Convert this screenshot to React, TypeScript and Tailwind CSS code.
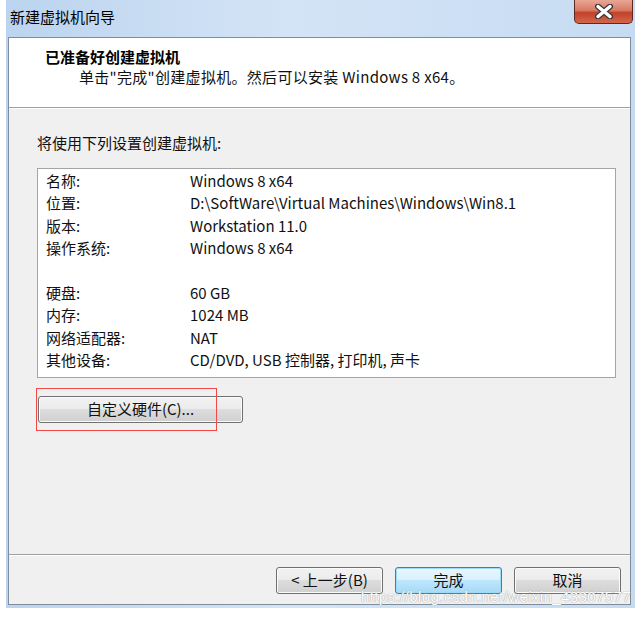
import React from "react";

const FONT = '"Noto Sans CJK SC", "Noto Sans", sans-serif';

const rows: [string, string][] = [
  ["名称:", "Windows 8 x64"],
  ["位置:", "D:\\SoftWare\\Virtual Machines\\Windows\\Win8.1"],
  ["版本:", "Workstation 11.0"],
  ["操作系统:", "Windows 8 x64"],
  ["", ""],
  ["硬盘:", "60 GB"],
  ["内存:", "1024 MB"],
  ["网络适配器:", "NAT"],
  ["其他设备:", "CD/DVD, USB 控制器, 打印机, 声卡"],
];

function WinButton({ label, primary = false, className = "" }: { label: string; primary?: boolean; className?: string }) {
  return (
    <div
      className={
        "h-[27px] flex items-center justify-center rounded-[3px] border text-[15px] text-[#111] whitespace-pre " +
        (primary
          ? "border-[#3c7fb1] bg-[linear-gradient(#eaf6fd_0%,#d9f0fc_50%,#bee6fd_50%,#a7d9f5_100%)] shadow-[inset_0_0_0_1px_#9ddcf8] "
          : "border-[#707070] bg-[linear-gradient(#f2f2f2_0%,#ebebeb_50%,#dddddd_50%,#cfcfcf_100%)] shadow-[inset_0_0_0_1px_#fbfbfb] ") +
        className
      }
    >
      {label}
    </div>
  );
}

export default function App() {
  return (
    <div className="relative w-[643px] h-[617px] bg-white overflow-hidden" style={{ fontFamily: FONT }}>
      {/* window frame */}
      <div className="ml-[6px] w-[629px] pl-[2px] pr-[4px] pb-[3px] bg-[linear-gradient(90deg,#bcd4ef_0%,#d4e4f6_45%,#c6dbf2_100%)]">
        {/* title bar */}
        <div className="relative h-[37px] flex items-center pl-[2px] pb-[2px] text-[15px] text-black">
          新建虚拟机向导
          <div className="absolute right-[-2px] top-0 w-[59px] h-[24px] rounded-b-[5px] border border-t-0 border-[#5b2a22] bg-[linear-gradient(#e9a796_0%,#d77a63_45%,#c2412a_55%,#d4664a_100%)] flex items-center justify-center">
            <svg width="20" height="15" viewBox="0 0 20 15">
              <path d="M4 2.5 L16 12.5 M16 2.5 L4 12.5" stroke="#3b3b3b" strokeWidth="6" strokeLinecap="round" />
              <path d="M4 2.5 L16 12.5 M16 2.5 L4 12.5" stroke="#ffffff" strokeWidth="3.5" strokeLinecap="round" />
            </svg>
          </div>
        </div>

        {/* client area */}
        <div className="border border-[#7f8c99] bg-[#f0f0f0]">
          {/* header */}
          <div className="h-[70px] bg-white border-b border-[#a0a0a0] pl-[36px] pt-[8px]">
            <div className="text-[15px] font-bold leading-[21px] text-black">已准备好创建虚拟机</div>
            <div className="pl-[34px] text-[15px] leading-[20px] text-[#111] tracking-[0.3px]">
              单击"完成"创建虚拟机。然后可以安装 Windows 8 x64。
            </div>
          </div>

          {/* body */}
          <div className="h-[446px] pt-[24px] px-[28px] border-t border-white">
            <div className="text-[15px] leading-[20px] text-[#111]">将使用下列设置创建虚拟机:</div>
            <div className="mt-[15px] mr-[-14px] h-[210px] bg-white border border-[#a5a5a5] pl-[8px] pt-[1px]">
              {rows.map(([k, v], i) => (
                <div key={i} className="flex h-[22.4px] items-center text-[15px] text-[#111]">
                  <span className="w-[144px]">{k}</span>
                  <span>{v}</span>
                </div>
              ))}
            </div>
            <div className="relative mt-[18px]">
              <WinButton label="自定义硬件(C)..." className="ml-[1px] w-[205px]" />
              <div className="absolute left-[-1px] top-[-8px] w-[181px] h-[43px] border border-[#f24848]" />
            </div>
          </div>

          {/* footer */}
          <div className="border-t border-[#a0a0a0]">
            <div className="h-[49px] border-t border-white flex items-start justify-end gap-[12px] pt-[11px] pr-[9px]">
              <WinButton label="< 上一步(B)" className="w-[107px]" />
              <WinButton label="完成" primary className="w-[107px]" />
              <WinButton label="取消" className="w-[107px]" />
            </div>
          </div>
        </div>
      </div>

      {/* watermark */}
      <div
        className="absolute left-[361px] top-[588px] text-[15px] leading-[18px] tracking-[0.4px] text-white whitespace-nowrap"
        style={{ fontFamily: '"Liberation Sans", Arial, sans-serif', textShadow: "0 0 1px #a0a0a0, 0 0 1px #a0a0a0" }}
      >
        https://blog.csdn.net/weixin_43307577
      </div>
    </div>
  );
}
